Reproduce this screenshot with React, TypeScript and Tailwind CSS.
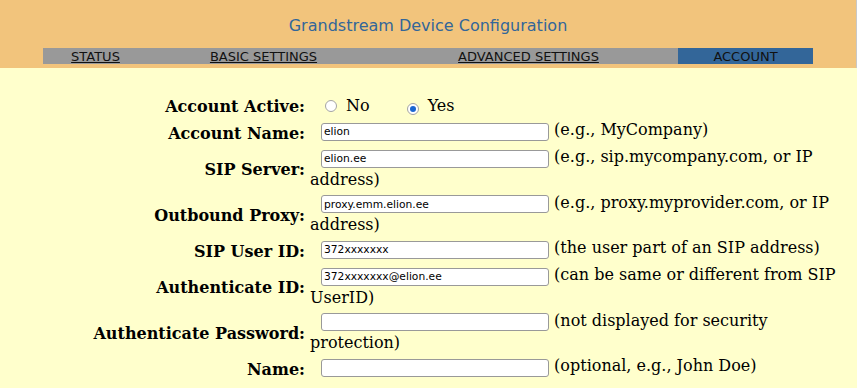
import React from "react";

const serif = { fontFamily: '"DejaVu Serif", "Liberation Serif", serif' };

function Radio({ checked }: { checked?: boolean }) {
  return (
    <span className="inline-flex w-[12px] h-[12px] rounded-full border border-[#a4a4a4] bg-white items-center justify-center align-[-1px]">
      {checked ? <span className="block w-[6px] h-[6px] rounded-full bg-[#1b66d1]" /> : null}
    </span>
  );
}

function Field({ value, desc }: { value: string; desc: string }) {
  return (
    <>
      <input
        readOnly
        value={value}
        className="inline-block align-baseline ml-[11px] my-[2px] w-[228px] h-[18px] px-[2px] border border-[#999999] rounded-[3px] bg-white text-black text-[10.7px] outline-none font-['DejaVu_Sans',sans-serif]"
      />{" "}
      {desc}
    </>
  );
}

const rows: { label: string; value: string; desc: string }[] = [
  { label: "Account Name:", value: "elion", desc: "(e.g., MyCompany)" },
  { label: "SIP Server:", value: "elion.ee", desc: "(e.g., sip.mycompany.com, or IP address)" },
  { label: "Outbound Proxy:", value: "proxy.emm.elion.ee", desc: "(e.g., proxy.myprovider.com, or IP address)" },
  { label: "SIP User ID:", value: "372xxxxxxx", desc: "(the user part of an SIP address)" },
  { label: "Authenticate ID:", value: "372xxxxxxx@elion.ee", desc: "(can be same or different from SIP UserID)" },
  { label: "Authenticate Password:", value: "", desc: "(not displayed for security protection)" },
  { label: "Name:", value: "", desc: "(optional, e.g., John Doe)" },
];

export default function App() {
  return (
    <div className="w-[857px] min-h-[388px] bg-[#FFFFCC] overflow-hidden">
      <div className="h-[68px] bg-[#F2C47C] border-r border-[#c8c8c8] flex flex-col font-['DejaVu_Sans',sans-serif]">
        <div className="pt-[16px] text-center text-[16px] leading-[19px] text-[#336699]">
          Grandstream Device Configuration
        </div>
        <div className="mt-[13px] ml-[43px] flex h-[16px] text-[13px] leading-[15px] text-[#111]">
          <div className="w-[105px] bg-[#999999] flex items-center justify-center">
            <span className="underline">STATUS</span>
          </div>
          <div className="w-[231px] bg-[#999999] flex items-center justify-center">
            <span className="underline">BASIC SETTINGS</span>
          </div>
          <div className="w-[299px] bg-[#999999] flex items-center justify-center">
            <span className="underline">ADVANCED SETTINGS</span>
          </div>
          <div className="w-[135px] bg-[#336699] flex items-center justify-center">
            <span>ACCOUNT</span>
          </div>
        </div>
      </div>

      <div
        className="mt-[25px] grid grid-cols-[305px_538px] gap-x-[5px] gap-y-[4px] text-[16px] text-black"
        style={serif}
      >
        <div className="flex items-center justify-end pt-[4px] font-bold leading-[19px]">Account Active:</div>
        <div className="h-[23px] pt-[3px] leading-[19px]">
          <span className="ml-[15px]">
            <Radio />
          </span>
          <span className="ml-[9px]">No</span>
          <span className="ml-[37px]">
            <Radio checked />
          </span>
          <span className="ml-[9px]">Yes</span>
        </div>

        {rows.map((r) => (
          <React.Fragment key={r.label}>
            <div className="flex items-center justify-end pt-[4px] font-bold leading-[19px]">{r.label}</div>
            <div className="leading-[19px]">
              <Field value={r.value} desc={r.desc} />
            </div>
          </React.Fragment>
        ))}
      </div>
    </div>
  );
}
